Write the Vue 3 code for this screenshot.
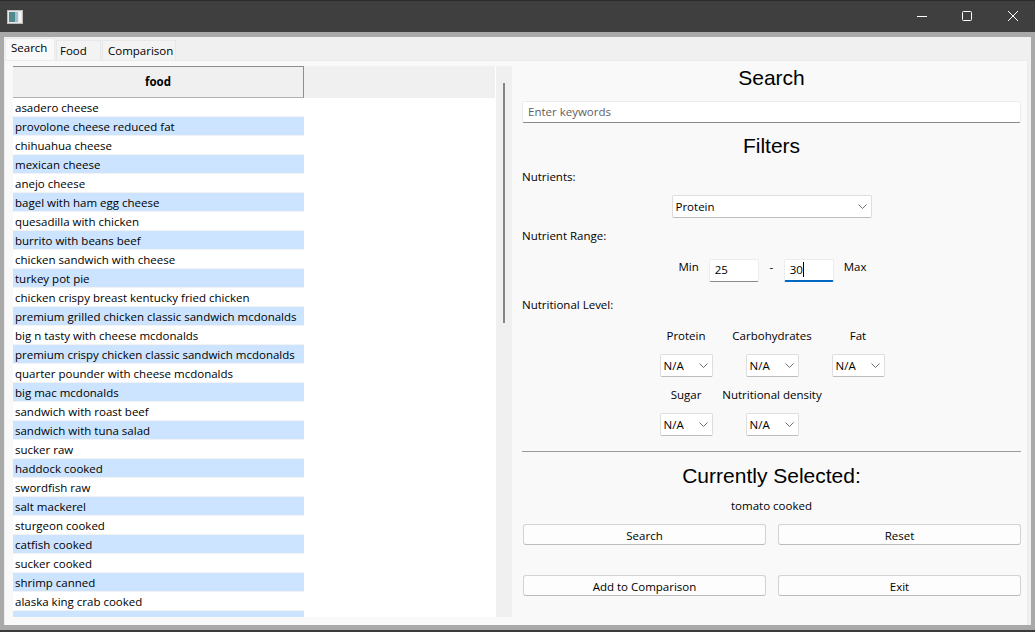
<template>
  <div class="window">
    <!-- title bar -->
    <header class="titlebar">
      <svg class="app-icon" width="16" height="14" viewBox="0 0 16 14">
        <rect x="0.5" y="0.5" width="15" height="13" fill="#e8e8e8" stroke="#bdbdbd" />
        <rect x="2" y="2" width="6" height="10" fill="#4f8a8f" />
        <rect x="8" y="2" width="3" height="10" fill="#9fc0d0" />
        <rect x="12" y="2" width="2" height="10" fill="#f4f4f4" />
      </svg>
      <div class="win-controls">
        <svg width="46" height="32" viewBox="0 0 46 32"><path d="M20 16.5h10" stroke="#fff" fill="none" /></svg>
        <svg width="46" height="32" viewBox="0 0 46 32"><rect x="19.5" y="11.5" width="9" height="9" rx="1" stroke="#fff" fill="none" /></svg>
        <svg width="46" height="32" viewBox="0 0 46 32"><path d="M19 11l10 10M29 11l-10 10" stroke="#fff" fill="none" /></svg>
      </div>
    </header>

    <main class="client">
      <nav class="tabs">
        <a v-for="t in tabs" :key="t" class="tab" :class="{ active: t === 'Search' }">{{ t }}</a>
      </nav>

      <section class="pane">
        <!-- results table -->
        <div class="table-wrap">
          <div class="table">
            <div class="table-head">
              <div class="head-cell">food</div>
            </div>
            <div class="rows">
              <div v-for="(f, i) in foods" :key="i" class="row" :class="{ alt: i % 2 === 1 }">{{ f }}</div>
            </div>
          </div>
          <div class="scrollbar"><div class="thumb"></div></div>
        </div>

        <!-- search and filters -->
        <div class="side">
          <h1 class="search-title">Search</h1>
          <input class="keywords" placeholder="Enter keywords" />
          <h1 class="filters-title">Filters</h1>

          <div class="label nutrients-label">Nutrients:</div>
          <div class="combo-row">
            <div class="combo wide">
              <span>Protein</span>
              <svg width="9" height="5" viewBox="0 0 9 5"><path d="M0.5 0.5l4 4 4-4" stroke="#6e6e6e" fill="none" /></svg>
            </div>
          </div>

          <div class="label range-label">Nutrient Range:</div>
          <div class="range">
            <span class="range-min">Min</span>
            <div class="num">25</div>
            <span class="dash">-</span>
            <div class="num focus"><span class="caret">30</span></div>
            <span class="range-max">Max</span>
          </div>

          <div class="label level-label">Nutritional Level:</div>
          <div class="levels">
            <div v-for="l in levels" :key="l" class="level">
              <div class="level-name">{{ l }}</div>
              <div class="combo small">
                <span>N/A</span>
                <svg width="9" height="5" viewBox="0 0 9 5"><path d="M0.5 0.5l4 4 4-4" stroke="#6e6e6e" fill="none" /></svg>
              </div>
            </div>
          </div>

          <hr class="divider" />

          <h1 class="selected-title">Currently Selected:</h1>
          <div class="selected-value">tomato cooked</div>

          <div class="buttons">
            <button>Search</button>
            <button>Reset</button>
            <button>Add to Comparison</button>
            <button>Exit</button>
          </div>
        </div>
      </section>
    </main>
  </div>
</template>

<script setup>
const tabs = ['Search', 'Food', 'Comparison']

const levels = ['Protein', 'Carbohydrates', 'Fat', 'Sugar', 'Nutritional density']

const foods = [
  'asadero cheese',
  'provolone cheese reduced fat',
  'chihuahua cheese',
  'mexican cheese',
  'anejo cheese',
  'bagel with ham egg cheese',
  'quesadilla with chicken',
  'burrito with beans beef',
  'chicken sandwich with cheese',
  'turkey pot pie',
  'chicken crispy breast kentucky fried chicken',
  'premium grilled chicken classic sandwich mcdonalds',
  'big n tasty with cheese mcdonalds',
  'premium crispy chicken classic sandwich mcdonalds',
  'quarter pounder with cheese mcdonalds',
  'big mac mcdonalds',
  'sandwich with roast beef',
  'sandwich with tuna salad',
  'sucker raw',
  'haddock cooked',
  'swordfish raw',
  'salt mackerel',
  'sturgeon cooked',
  'catfish cooked',
  'sucker cooked',
  'shrimp canned',
  'alaska king crab cooked',
  'dungeness crab cooked'
]
</script>

<style>
html,
body {
  margin: 0;
  overflow: hidden;
}
</style>

<style scoped>
.window {
  width: 1035px;
  height: 632px;
  box-sizing: border-box;
  border-bottom: 2px solid #3a3a3a;
  overflow: hidden;
  display: flex;
  flex-direction: column;
  background: #a9a9a9;
  font-family: "Open Sans", "Noto Sans", sans-serif;
  font-size: 11.5px;
  color: #000;
}

.titlebar {
  height: 32px;
  flex: none;
  box-sizing: border-box;
  background: #3f3f3f;
  border-top: 1px solid #2b2b2b;
  display: flex;
  align-items: center;
  justify-content: space-between;
  padding-left: 7px;
}

.win-controls {
  display: flex;
  margin-top: -1px;
}

.win-controls svg {
  display: block;
}

.client {
  margin: 5px 4px 5px;
  flex: 1;
  min-height: 0;
  background: #f0f0f0;
  display: flex;
  flex-direction: column;
}

.tabs {
  height: 23px;
  flex: none;
  display: flex;
  align-items: flex-end;
  padding-left: 1px;
  gap: 1px;
}

.tab {
  height: 20px;
  line-height: 19px;
  box-sizing: border-box;
  padding: 0 4px 0 4px;
  background: #f3f3f3;
  border: 1px solid #e8e8e8;
  border-bottom: none;
}

.tab:nth-child(2) {
  width: 45px;
  padding-left: 3px;
}

.tab:nth-child(3) {
  width: 74px;
  padding-left: 5px;
}

.tab.active {
  width: 50px;
  height: 22px;
  line-height: 18px;
  padding-left: 5px;
  background: #f9f9f9;
  border-color: #ececec;
}

.pane {
  flex: 1;
  min-height: 0;
  margin-right: 3px;
  background: #f9f9f9;
  border: 1px solid #ececec;
  border-bottom: none;
  display: flex;
  padding: 5px 0 8px 8px;
}

.table-wrap {
  width: 499px;
  flex: none;
  display: flex;
  overflow: hidden;
}

.table {
  width: 483px;
  flex: none;
  background: #fff;
  overflow: hidden;
}

.table-head {
  height: 32px;
  width: 482px;
  background: #f0f0f0;
}

.head-cell {
  width: 291px;
  height: 32px;
  box-sizing: border-box;
  border: 1px solid #8e8e8e;
  border-left: none;
  border-bottom-color: #b0b0b0;
  font-weight: 700;
  text-align: center;
  line-height: 30px;
}

.rows {
  width: 291px;
}

.row {
  height: 19px;
  line-height: 20px;
  box-sizing: border-box;
  padding-left: 2px;
  background: #fff;
  border-bottom: 1px solid #f2f2f2;
  white-space: nowrap;
}

.row.alt {
  background: #cce4ff;
}

.scrollbar {
  width: 16px;
  background: #f0f0f0;
  display: flex;
  justify-content: center;
  padding-top: 17px;
  box-sizing: border-box;
}

.thumb {
  width: 2px;
  height: 240px;
  background: #858585;
}

.side {
  flex: 1;
  min-width: 0;
  padding: 0 6px 0 10px;
  display: flex;
  flex-direction: column;
}

h1 {
  margin: 0;
  font-family: "Liberation Sans", Arial, sans-serif;
  font-weight: 400;
  font-size: 21px;
  line-height: 24px;
  text-align: center;
}

.keywords {
  display: block;
  margin-top: 11px;
  height: 22px;
  box-sizing: border-box;
  border: 1px solid #ececec;
  border-bottom-color: #8a8a8a;
  border-radius: 2px;
  background: #fff;
  padding: 0 5px 2px;
  font: inherit;
  outline: none;
}

.keywords::placeholder {
  color: #5f5f5f;
  opacity: 1;
}

.filters-title {
  margin-top: 11px;
}

.label {
  line-height: 16px;
}

.nutrients-label {
  margin-top: 11px;
}

.combo-row {
  margin-top: 10px;
  display: flex;
  justify-content: center;
}

.combo {
  box-sizing: border-box;
  height: 23px;
  background: #fff;
  border: 1px solid #dedede;
  border-bottom-color: #bdbdbd;
  border-radius: 2px;
  display: flex;
  align-items: center;
  justify-content: space-between;
  padding: 0 4px 0 3px;
}

.combo.wide {
  width: 200px;
}

.combo.small {
  width: 53px;
}

.range-label {
  margin-top: 10px;
}

.range {
  margin-top: 15px;
  padding-left: 2px;
  display: flex;
  align-items: center;
  justify-content: center;
  height: 23px;
}

.range-min {
  margin-right: 10px;
  margin-top: -8px;
}

.range-max {
  margin-left: 10px;
  margin-top: -8px;
}

.dash {
  width: 25px;
  text-align: center;
  margin-top: -8px;
}

.num {
  width: 50px;
  height: 23px;
  line-height: 20px;
  box-sizing: border-box;
  background: #fff;
  border: 1px solid #ececec;
  border-bottom-color: #8a8a8a;
  border-radius: 2px;
  padding-left: 5px;
}

.num.focus {
  border-bottom: 2px solid #0067c0;
}

.caret {
  border-right: 1px solid #000;
}

.level-label {
  margin-top: 15px;
}

.levels {
  margin-top: 15px;
  padding-left: 1px;
  display: grid;
  grid-template-columns: repeat(3, 86px);
  justify-content: center;
  row-gap: 10px;
}

.level {
  display: flex;
  flex-direction: column;
  align-items: center;
}

.level-name {
  line-height: 16px;
  white-space: nowrap;
  margin-bottom: 10px;
}

.divider {
  width: 100%;
  box-sizing: border-box;
  margin: 15px 0 0;
  border: none;
  border-top: 1px solid #9a9a9a;
}

.selected-title {
  margin-top: 12px;
}

.selected-value {
  margin-top: 10px;
  line-height: 16px;
  text-align: center;
}

.buttons {
  margin-top: 10px;
  padding-left: 1px;
  display: grid;
  grid-template-columns: 243px 243px;
  column-gap: 12px;
  row-gap: 30px;
}

button {
  height: 21px;
  padding: 1px 0 0;
  box-sizing: border-box;
  background: #fdfdfd;
  border: 1px solid #d3d3d3;
  border-bottom-color: #bcbcbc;
  border-radius: 3px;
  font: inherit;
  color: #000;
}
</style>
